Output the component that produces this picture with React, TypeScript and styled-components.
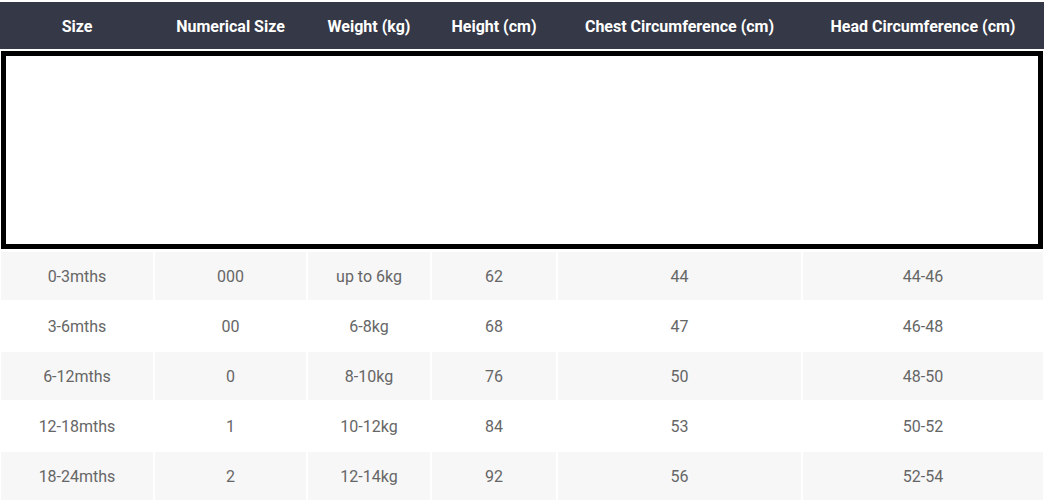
import React from "react";
import styled, { createGlobalStyle } from "styled-components";

const Global = createGlobalStyle`
  html, body { margin: 0; padding: 0; background: #ffffff; }
  body { font-family: Roboto, "Liberation Sans", Arial, sans-serif; }
`;

const Page = styled.div`
  width: 1047px;
  padding-top: 2px;
  display: flex;
  flex-direction: column;
`;

const cols = "152px 151px 122px 124px 243px 240px";

const Header = styled.div`
  width: 1044px;
  height: 47px;
  background: #353846;
  display: grid;
  grid-template-columns: ${cols};
  column-gap: 2px;
  padding-left: 1px;
  box-sizing: border-box;
`;

const HeadCell = styled.div`
  display: flex;
  align-items: center;
  justify-content: center;
  padding-top: 2px;
  color: #ffffff;
  font-weight: 700;
  font-size: 16px;
`;

const Frame = styled.div`
  margin: 2px 0 0 1px;
  width: 1042px;
  height: 198px;
  border: 5px solid #000000;
  box-sizing: border-box;
  background: #ffffff;
`;

const Body = styled.div`
  margin: 3px 0 0 1px;
  display: flex;
  flex-direction: column;
  gap: 2px;
`;

const Row = styled.div<{ $shaded: boolean }>`
  display: grid;
  grid-template-columns: ${cols};
  column-gap: 2px;
  height: 48px;
  & > div {
    background: ${(p) => (p.$shaded ? "#f7f7f7" : "#ffffff")};
  }
`;

const Cell = styled.div`
  display: flex;
  align-items: center;
  justify-content: center;
  padding-top: 1px;
  color: #666666;
  font-size: 16px;
`;

const headers = [
  "Size",
  "Numerical Size",
  "Weight (kg)",
  "Height (cm)",
  "Chest Circumference (cm)",
  "Head Circumference (cm)",
];

const rows = [
  ["0-3mths", "000", "up to 6kg", "62", "44", "44-46"],
  ["3-6mths", "00", "6-8kg", "68", "47", "46-48"],
  ["6-12mths", "0", "8-10kg", "76", "50", "48-50"],
  ["12-18mths", "1", "10-12kg", "84", "53", "50-52"],
  ["18-24mths", "2", "12-14kg", "92", "56", "52-54"],
];

export default function App() {
  return (
    <>
      <Global />
      <Page>
        <Header>
          {headers.map((h) => (
            <HeadCell key={h}>{h}</HeadCell>
          ))}
        </Header>
        <Frame />
        <Body>
          {rows.map((r, i) => (
            <Row key={i} $shaded={i % 2 === 0}>
              {r.map((c, j) => (
                <Cell key={j}>{c}</Cell>
              ))}
            </Row>
          ))}
        </Body>
      </Page>
    </>
  );
}
